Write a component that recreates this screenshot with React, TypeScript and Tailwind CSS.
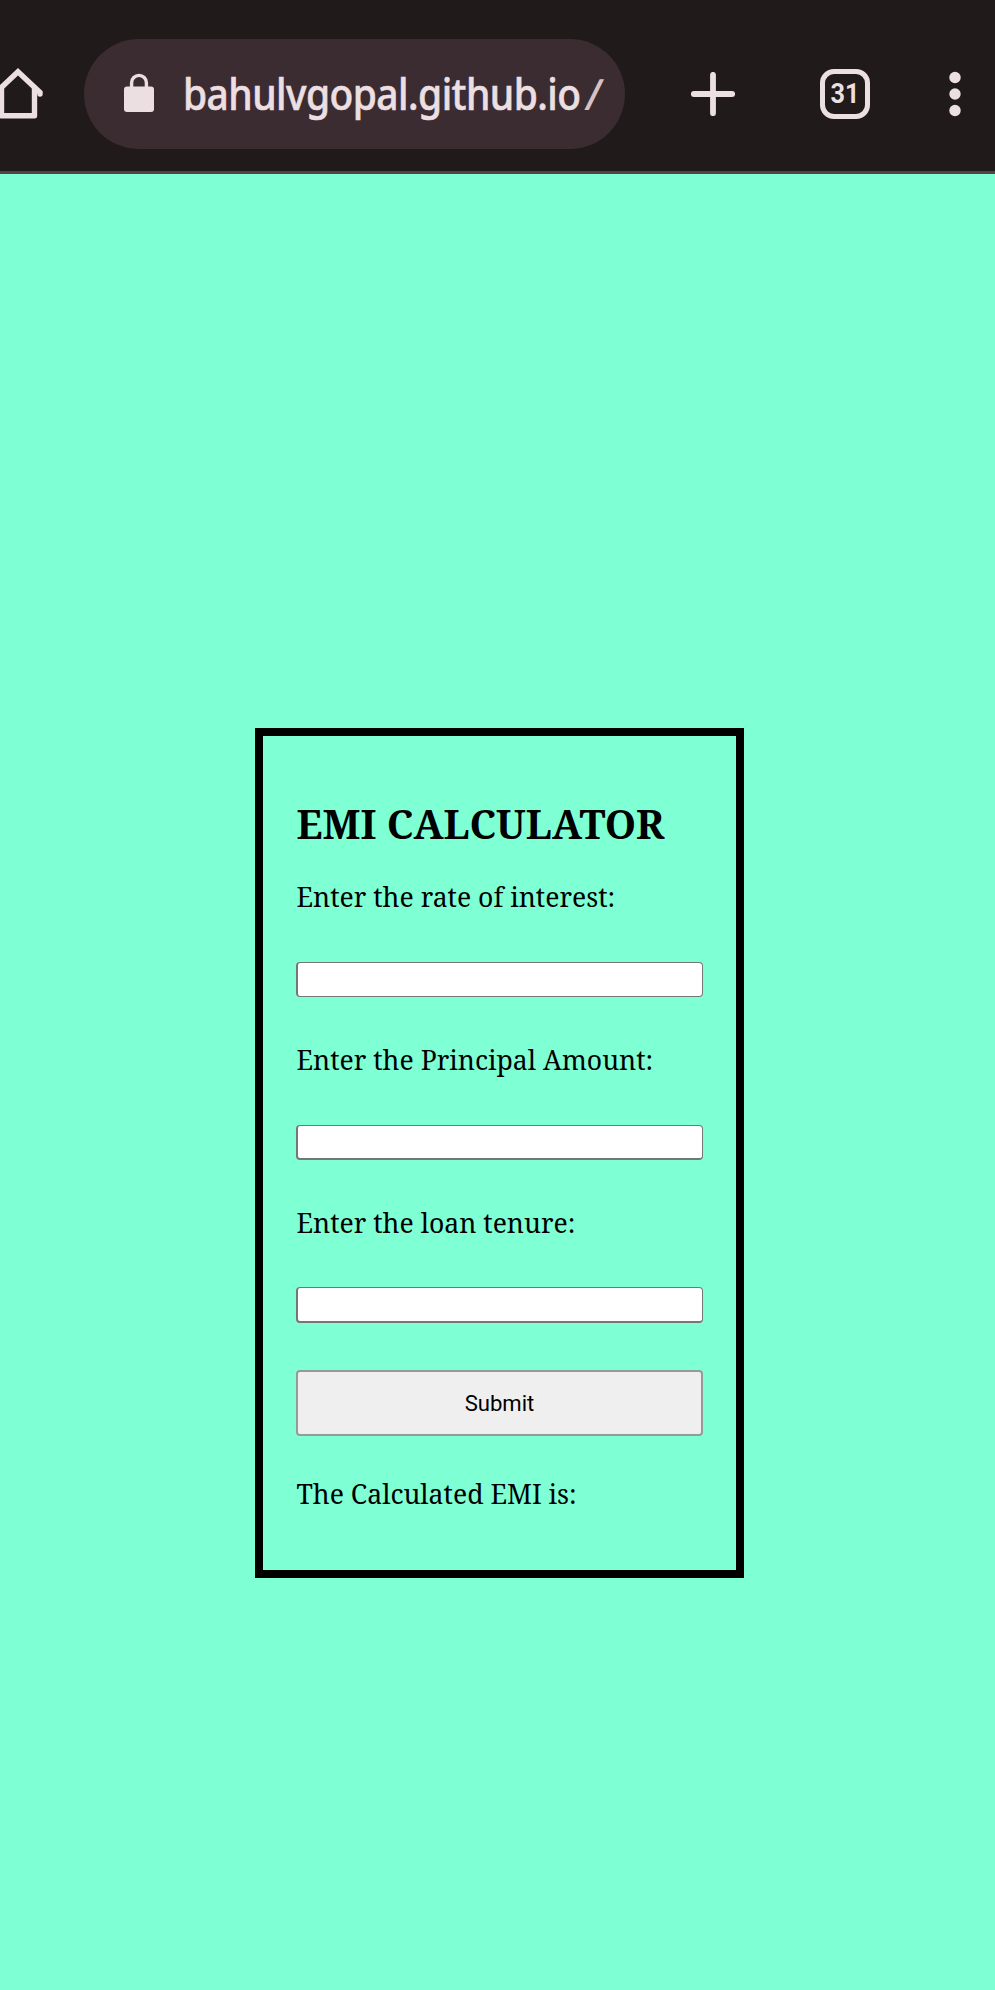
import React from "react";

const serif = "font-['Noto_Serif','DejaVu_Serif',serif]";

function HomeIcon() {
  return (
    <svg className="-ml-2 h-[54px] w-[52px] shrink-0" viewBox="-8 67 52 54" fill="none" stroke="#ecdfe1" strokeWidth="5.4" strokeLinecap="round" strokeLinejoin="round">
      <path d="M-5 93.5 L18 71.8 L40 92.5 V94" strokeLinejoin="miter" />
      <path d="M1.5 88 V115.8 H34.5 V88" />
    </svg>
  );
}

function LockIcon() {
  return (
    <svg className="-mt-[2px] h-[40px] w-[30px] shrink-0" viewBox="0 0 30 40">
      <path d="M7.6 15 V9.8 A7.4 7.4 0 0 1 22.4 9.8 V15" fill="none" stroke="#ecdfe1" strokeWidth="3.4" />
      <rect x="0" y="13.6" width="30" height="25.4" rx="3" fill="#ecdfe1" />
    </svg>
  );
}

function BrowserBar() {
  return (
    <header className="flex h-[174px] shrink-0 items-center overflow-hidden border-b-[3px] border-[#544447] bg-[#201a1b] pt-[17px]">
      <HomeIcon />
      <div className="ml-[40px] flex h-[110px] w-[541px] shrink-0 items-center rounded-full bg-[#3a2c30] pl-[40px]">
        <LockIcon />
        <div className="ml-[29px] flex whitespace-nowrap font-['Noto_Sans',sans-serif] text-[43px] leading-[60px] font-medium text-[#ecdfe1]">
          <span className="block w-[403px] origin-left scale-x-[0.905] tracking-[-0.6px] [-webkit-text-stroke:0.6px_#ecdfe1]">bahulvgopal.github.io</span>
          <span className="block origin-center -skew-x-[7deg] text-[#d6c2c6]">/</span>
        </div>
      </div>
      <svg className="ml-[66px] h-[44px] w-[44px] shrink-0" viewBox="0 0 44 44" stroke="#ecdfe1" strokeWidth="5.8" strokeLinecap="round">
        <path d="M22 2.8 V41.2 M2.8 22 H41.2" />
      </svg>
      <div className="ml-[85px] flex h-[50px] w-[50px] shrink-0 items-center justify-center rounded-[14px] border-[5.5px] border-[#ecdfe1]">
        <span className="scale-x-[0.9] font-['Roboto',sans-serif] text-[28px] leading-[28px] font-bold text-[#ecdfe1]">31</span>
      </div>
      <svg className="ml-[79px] h-[46px] w-[12px] shrink-0" viewBox="0 0 12 46" fill="#ecdfe1">
        <circle cx="6" cy="6.5" r="5.7" />
        <circle cx="6" cy="23" r="5.7" />
        <circle cx="6" cy="39.5" r="5.7" />
      </svg>
    </header>
  );
}

function Field({ label, box }: { label: string; box: string }) {
  return (
    <label className="flex h-[163px] flex-col">
      <span className={`${serif} h-[40px] whitespace-nowrap pl-[0.5px] text-[26.6px] leading-[40px]`}>{label}</span>
      <input type="number" className={`w-full rounded-[4px] border border-l-2 border-[#767676] bg-white px-1 outline-none ${box}`} />
    </label>
  );
}

export default function App() {
  return (
    <div className="flex h-[1990px] w-[995px] flex-col overflow-hidden bg-[#7fffd4] text-black">
      <BrowserBar />
      <main className="mt-[554px] ml-[255px] flex h-[850px] w-[489px] flex-col border-8 border-black px-[33px] pt-[60px]">
        <h1 className={`${serif} h-[56px] whitespace-nowrap pl-[0.5px] text-[39.85px] leading-[56px] font-bold`}>EMI CALCULATOR</h1>
        <form className="mt-[25px] flex flex-col" onSubmit={(e) => e.preventDefault()}>
          <Field label="Enter the rate of interest:" box="mt-[45px] h-[35px]" />
          <Field label="Enter the Principal Amount:" box="mt-[45px] h-[35px] border-b-2" />
          <Field label="Enter the loan tenure:" box="mt-[44px] h-[36px] border-b-2" />
          <button type="submit" className="mt-[4px] h-[66px] w-full rounded-[4px] border-2 border-[#969b99] bg-[#efefef] pt-[2px] font-['Roboto',sans-serif] text-[22.1px]">
            Submit
          </button>
        </form>
        <p className={`${serif} mt-[38px] h-[40px] whitespace-nowrap pl-[0.5px] text-[26.6px] leading-[40px]`}>The Calculated EMI is:</p>
      </main>
    </div>
  );
}
